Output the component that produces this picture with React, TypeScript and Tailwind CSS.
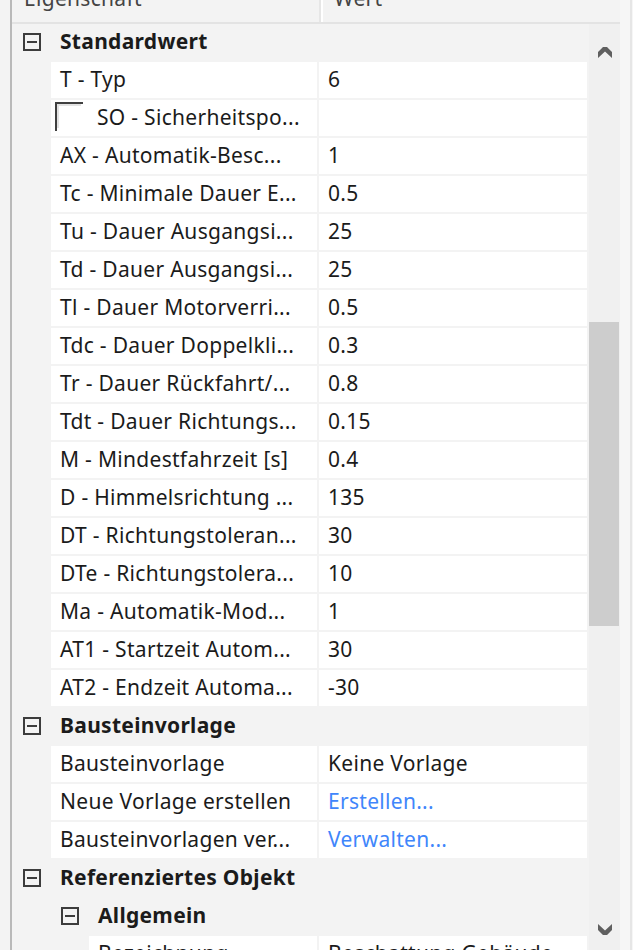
type PropRow = {
  name: string;
  value?: string;
  link?: boolean;
  checkbox?: boolean;
};

const standardRows: PropRow[] = [
  { name: "T - Typ", value: "6" },
  { name: "SO - Sicherheitspo...", checkbox: true },
  { name: "AX - Automatik-Besc...", value: "1" },
  { name: "Tc - Minimale Dauer E...", value: "0.5" },
  { name: "Tu - Dauer Ausgangsi...", value: "25" },
  { name: "Td - Dauer Ausgangsi...", value: "25" },
  { name: "Tl - Dauer Motorverri...", value: "0.5" },
  { name: "Tdc - Dauer Doppelkli...", value: "0.3" },
  { name: "Tr - Dauer Rückfahrt/...", value: "0.8" },
  { name: "Tdt - Dauer Richtungs...", value: "0.15" },
  { name: "M - Mindestfahrzeit [s]", value: "0.4" },
  { name: "D - Himmelsrichtung ...", value: "135" },
  { name: "DT - Richtungstoleran...", value: "30" },
  { name: "DTe - Richtungstolera...", value: "10" },
  { name: "Ma - Automatik-Mod...", value: "1" },
  { name: "AT1 - Startzeit Autom...", value: "30" },
  { name: "AT2 - Endzeit Automa...", value: "-30" },
];

const templateRows: PropRow[] = [
  { name: "Bausteinvorlage", value: "Keine Vorlage" },
  { name: "Neue Vorlage erstellen", value: "Erstellen...", link: true },
  { name: "Bausteinvorlagen ver...", value: "Verwalten...", link: true },
];

function MinusBox() {
  return (
    <span className="flex h-[18px] w-[18px] flex-none items-center justify-center border-2 border-[#3c3c3c]">
      <span className="h-[2px] w-[10px] bg-[#3c3c3c]" />
    </span>
  );
}

function Category({ title, level = 0 }: { title: string; level?: number }) {
  return (
    <div
      className={`mb-[2px] flex h-[36px] items-center font-bold ${
        level === 0 ? "pl-[11px]" : "pl-[49px]"
      }`}
    >
      <MinusBox />
      <span className="ml-[19px]">{title}</span>
    </div>
  );
}

function Row({ row, indent = 39 }: { row: PropRow; indent?: number }) {
  return (
    <div className="mb-[2px] flex h-[36px]">
      <div className="flex-none" style={{ width: indent }} />
      <div className="flex min-w-0 flex-1 items-center overflow-hidden whitespace-nowrap bg-white pl-[9px]">
        {row.checkbox ? (
          <>
            <span className="relative -mt-[4px] -ml-[5px] h-[29px] w-[28px] flex-none border-t-2 border-l-2 border-[#404040]">
              <span className="absolute top-0 left-0 h-[24px] w-[24px] border-t-2 border-l-2 border-[#e3e3e3]" />
            </span>
            <span className="ml-[14px]">{row.name}</span>
          </>
        ) : (
          row.name
        )}
      </div>
      <div className="w-[2px] flex-none" />
      <div
        className={`flex w-[268px] flex-none items-center overflow-hidden whitespace-nowrap bg-white pl-[9px] ${
          row.link ? "text-[#3f86fb]" : ""
        }`}
      >
        {row.value}
      </div>
      <div className="w-[2px] flex-none" />
    </div>
  );
}

function ChevronUp() {
  return (
    <svg width="14" height="11" viewBox="0 0 14 11" className="fill-[#5f5f5f]">
      <path d="M5 0 L9 0 L14 5 L14 11 L7 4.5 L0 11 L0 5 Z" />
    </svg>
  );
}

function ChevronDown() {
  return (
    <svg width="14" height="11" viewBox="0 0 14 11" className="fill-[#5f5f5f]">
      <path d="M0 0 L7 6.5 L14 0 L14 6 L9 11 L5 11 L0 6 Z" />
    </svg>
  );
}

export default function App() {
  return (
    <div
      className="flex h-[950px] w-[633px] overflow-hidden bg-[#f3f3f3] text-[21px] tracking-[0.3px] text-[#1b1b1b]"
      style={{ fontFamily: '"Noto Sans", "Open Sans", sans-serif' }}
    >
      <div className="w-[10px] flex-none bg-[#f3f3f3]" />
      <div className="w-[2px] flex-none bg-[#b9b9b9]" />
      <div className="flex w-[608px] flex-none flex-col">
        {/* header */}
        <div className="flex h-[24px] flex-none overflow-hidden border-b-2 border-[#e3e3e3] bg-[#f3f3f3] text-[#444]">
          <div className="-mt-[16px] w-[307px] flex-none pl-[12px] leading-[28px]">Eigenschaft</div>
          <div className="w-[2px] flex-none bg-[#e6e6e6]" />
          <div className="w-[2px] flex-none bg-white" />
          <div className="-mt-[16px] flex-1 pl-[11px] leading-[28px]">Wert</div>
        </div>
        <div className="flex min-h-0 flex-1">
          <div className="min-w-0 flex-1 overflow-hidden">
            <Category title="Standardwert" />
            {standardRows.map((row) => (
              <Row key={row.name} row={row} />
            ))}
            <Category title="Bausteinvorlage" />
            {templateRows.map((row) => (
              <Row key={row.name} row={row} />
            ))}
            <Category title="Referenziertes Objekt" />
            <Category title="Allgemein" level={1} />
            <Row indent={77} row={{ name: "Bezeichnung", value: "Beschattung Gebäude" }} />
          </div>
          {/* scrollbar */}
          <div className="flex w-[31px] flex-none flex-col bg-[#f0f0f0]">
            <div className="flex h-[36px] flex-none items-end justify-center pb-[2px]">
              <ChevronUp />
            </div>
            <div className="h-[262px] flex-none" />
            <div className="mr-[1px] h-[304px] flex-none bg-[#cdcdcd]" />
            <div className="flex-1" />
            <div className="flex h-[26px] flex-none items-start justify-center">
              <ChevronDown />
            </div>
          </div>
        </div>
      </div>
      <div className="w-[10px] flex-none bg-[#f6f6f6]" />
      <div className="w-[2px] flex-none bg-[#e6e6e6]" />
      <div className="flex-1 bg-[#f6f6f6]" />
    </div>
  );
}
